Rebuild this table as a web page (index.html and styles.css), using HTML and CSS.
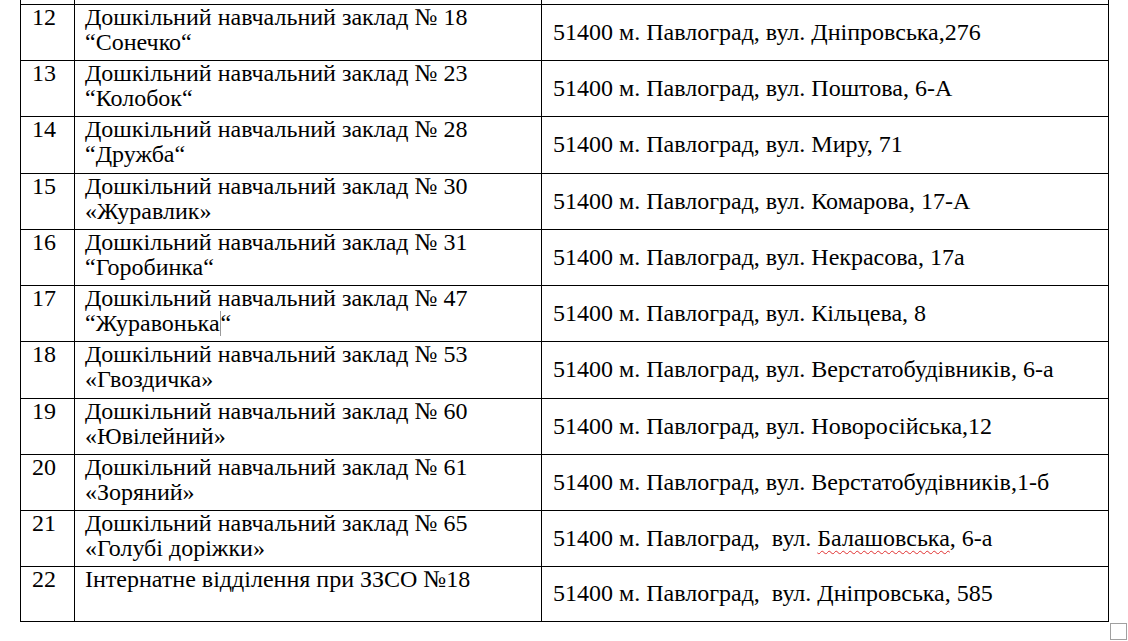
FILE: index.html
```html
<!DOCTYPE html>
<html lang="uk">
<head>
<meta charset="utf-8">
<link rel="stylesheet" href="styles.css">
</head>
<body>
<div class="page">
  <table class="list">
    <colgroup>
      <col class="c-num">
      <col class="c-name">
      <col class="c-addr">
    </colgroup>
    <tr class="stub"><td></td><td></td><td></td></tr>
    <tr><td class="num">12</td><td class="name">Дошкільний навчальний заклад № 18<br>“Сонечко“</td><td class="addr">51400 м. Павлоград, вул. Дніпровська,276</td></tr>
    <tr><td class="num">13</td><td class="name">Дошкільний навчальний заклад № 23<br>“Колобок“</td><td class="addr">51400 м. Павлоград, вул. Поштова, 6-А</td></tr>
    <tr class="tall"><td class="num">14</td><td class="name">Дошкільний навчальний заклад № 28<br>“Дружба“</td><td class="addr">51400 м. Павлоград, вул. Миру, 71</td></tr>
    <tr><td class="num">15</td><td class="name">Дошкільний навчальний заклад № 30<br>«Журавлик»</td><td class="addr">51400 м. Павлоград, вул. Комарова, 17-А</td></tr>
    <tr><td class="num">16</td><td class="name">Дошкільний навчальний заклад № 31<br>“Горобинка“</td><td class="addr">51400 м. Павлоград, вул. Некрасова, 17а</td></tr>
    <tr><td class="num">17</td><td class="name">Дошкільний навчальний заклад № 47<br>“Журавонька<span class="caret"></span>“</td><td class="addr">51400 м. Павлоград, вул. Кільцева, 8</td></tr>
    <tr class="tall"><td class="num">18</td><td class="name">Дошкільний навчальний заклад № 53<br>«Гвоздичка»</td><td class="addr">51400 м. Павлоград, вул. Верстатобудівників, 6-а</td></tr>
    <tr><td class="num">19</td><td class="name">Дошкільний навчальний заклад № 60<br>«Ювілейний»</td><td class="addr">51400 м. Павлоград, вул. Новоросійська,12</td></tr>
    <tr><td class="num">20</td><td class="name">Дошкільний навчальний заклад № 61<br>«Зоряний»</td><td class="addr">51400 м. Павлоград, вул. Верстатобудівників,1-б</td></tr>
    <tr><td class="num">21</td><td class="name">Дошкільний навчальний заклад № 65<br>«Голубі доріжки»</td><td class="addr">51400 м. Павлоград,&nbsp; вул. <span class="spell">Балашовська</span>, 6-а</td></tr>
    <tr class="last"><td class="num">22</td><td class="name">Інтернатне відділення при ЗЗСО №18</td><td class="addr">51400 м. Павлоград,&nbsp; вул. Дніпровська, 585</td></tr>
  </table>
  <div class="handle-row"><span class="handle"></span></div>
</div>
</body>
</html>
```

FILE: styles.css
```css
html, body {
  margin: 0;
  padding: 0;
  background: #fff;
}
.page {
  width: 1128px;
  height: 641px;
  overflow: hidden;
  padding-left: 20px;
  box-sizing: border-box;
}
.list {
  border-collapse: collapse;
  table-layout: fixed;
  width: 1088px;
  font-family: "Liberation Serif", "Times New Roman", serif;
  font-size: 24px;
  line-height: 25px;
  color: #000;
}
.c-num { width: 54px; }
.c-name { width: 467px; }
.c-addr { width: 567px; }
.list td {
  border: 1px solid #000;
  padding: 0 0 0 10px;
  height: 56px;
  box-sizing: border-box;
  white-space: nowrap;
}
.list tr.tall td { height: 57px; }
.list tr.last td { height: 55px; }
.list tr.stub td {
  height: 4px;
  border-top: none;
  padding: 0;
}
.list td.num {
  vertical-align: top;
  padding-left: 11px;
}
.list td.name {
  vertical-align: top;
}
.list td.addr {
  vertical-align: middle;
  padding-left: 11px;
}
.caret {
  display: inline-block;
  width: 1px;
  height: 25px;
  background: #9a9a9a;
  vertical-align: top;
}
.spell {
  text-decoration: underline wavy #e03030;
  text-decoration-thickness: 1px;
  text-underline-offset: 4px;
}
.handle-row {
  display: flex;
  padding-left: 1090px;
  padding-top: 1px;
}
.handle {
  display: block;
  width: 15px;
  height: 15px;
  border: 1px solid #a0a0a0;
}
```
